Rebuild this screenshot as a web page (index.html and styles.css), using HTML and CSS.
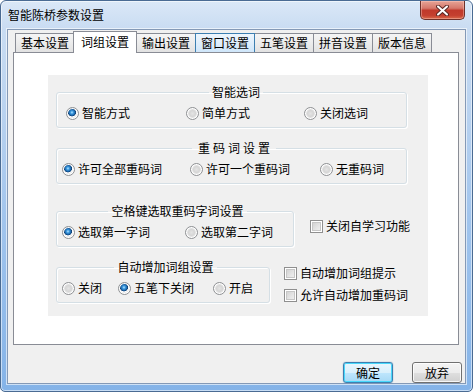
FILE: index.html
```html
<!DOCTYPE html>
<html lang="zh-CN">
<head>
<meta charset="utf-8">
<title>智能陈桥参数设置</title>
<link rel="stylesheet" href="styles.css">
</head>
<body>
<div class="window">
  <div class="titlebar">
    <span class="title">智能陈桥参数设置</span>
    <div class="close">
      <svg width="13" height="11" viewBox="0 0 13 11">
        <path d="M2 1.5 L11 9.5 M11 1.5 L2 9.5" stroke="#5b2a26" stroke-width="4" stroke-linecap="round"/>
        <path d="M2 1.5 L11 9.5 M11 1.5 L2 9.5" stroke="#ffffff" stroke-width="2" stroke-linecap="round"/>
      </svg>
    </div>
  </div>
  <div class="client">
    <div class="tabs">
      <div class="tab">基本设置</div>
      <div class="tab sel">词组设置</div>
      <div class="tab">输出设置</div>
      <div class="tab hover">窗口设置</div>
      <div class="tab">五笔设置</div>
      <div class="tab">拼音设置</div>
      <div class="tab">版本信息</div>
    </div>
    <div class="panel">
      <div class="inner">
        <fieldset class="group g1">
          <legend>智能选词</legend>
          <div class="opts">
            <label class="opt"><span class="radio on"></span>智能方式</label>
            <label class="opt"><span class="radio"></span>简单方式</label>
            <label class="opt"><span class="radio"></span>关闭选词</label>
          </div>
        </fieldset>
        <fieldset class="group g2">
          <legend class="spaced">重码词设置</legend>
          <div class="opts">
            <label class="opt"><span class="radio on"></span>许可全部重码词</label>
            <label class="opt"><span class="radio"></span>许可一个重码词</label>
            <label class="opt"><span class="radio"></span>无重码词</label>
          </div>
        </fieldset>
        <div class="row r3">
          <fieldset class="group g3">
            <legend>空格键选取重码字词设置</legend>
            <div class="opts">
              <label class="opt"><span class="radio on"></span>选取第一字词</label>
              <label class="opt"><span class="radio"></span>选取第二字词</label>
            </div>
          </fieldset>
          <div class="checks c3">
            <label class="opt"><span class="check"></span>关闭自学习功能</label>
          </div>
        </div>
        <div class="row r4">
          <fieldset class="group g4">
            <legend>自动增加词组设置</legend>
            <div class="opts">
              <label class="opt"><span class="radio"></span>关闭</label>
              <label class="opt"><span class="radio on"></span>五笔下关闭</label>
              <label class="opt"><span class="radio"></span>开启</label>
            </div>
          </fieldset>
          <div class="checks c4">
            <label class="opt"><span class="check"></span>自动增加词组提示</label>
            <label class="opt"><span class="check"></span>允许自动增加重码词</label>
          </div>
        </div>
      </div>
    </div>
    <div class="buttons">
      <div class="btn default">确定</div>
      <div class="btn">放弃</div>
    </div>
  </div>
</div>
</body>
</html>
```
FILE: styles.css
```css
html, body {
  margin: 0;
  padding: 0;
  background: #ffffff;
}
body {
  font-family: "Noto Sans CJK SC", "Microsoft YaHei", sans-serif;
  font-size: 12px;
  line-height: 14px;
  color: #000;
}
.window {
  box-sizing: border-box;
  width: 473px;
  height: 392px;
  border: 1px solid #4a6b93;
  border-radius: 6px 6px 5px 5px;
  background: linear-gradient(180deg, #dbe8f7 0%, #c9dcf2 7%, #bcd4f0 25%, #a2c5ed 55%, #84b3e8 100%);
  box-shadow: inset 0 0 0 1px rgba(255,255,255,0.55);
  overflow: hidden;
}
.titlebar {
  height: 28px;
  display: flex;
  align-items: center;
  padding-left: 7px;
}
.title {
  color: #000;
  line-height: 14px;
}
.close {
  margin-left: auto;
  margin-right: 7px;
  align-self: flex-start;
  box-sizing: border-box;
  width: 45px;
  height: 19px;
  border: 1px solid #6e3029;
  border-top: 0;
  border-radius: 0 0 5px 5px;
  background: linear-gradient(180deg, #e7a496 0%, #d6786b 40%, #c0392b 52%, #c4402f 80%, #d9694a 100%);
  box-shadow: inset 0 0 0 1px rgba(255,210,200,0.4);
  display: flex;
  align-items: center;
  justify-content: center;
}
.client {
  box-sizing: border-box;
  margin: 0 6px;
  height: 355px;
  border: 1px solid #8499b6;
  background: #f0f0f0;
  box-shadow: 0 0 0 1px rgba(255,255,255,0.6);
}
.tabs {
  display: flex;
  align-items: flex-end;
  height: 21px;
  margin: 1px 0 0 5px;
  padding-left: 2px;
}
.tab {
  box-sizing: border-box;
  height: 19px;
  padding: 0 5px;
  border: 1px solid #898c95;
  border-bottom: 0;
  margin-right: -1px;
  line-height: 18px;
  background: linear-gradient(180deg, #f5f5f5 0%, #ececec 50%, #e2e2e2 100%);
  white-space: nowrap;
}
.tab.sel {
  position: relative;
  z-index: 1;
  height: 22px;
  margin: 0 -1px -1px -1px;
  padding: 0 7px;
  line-height: 20px;
  background: #ffffff;
}
.tab.hover {
  position: relative;
  z-index: 1;
  border-color: #3c7fb1;
  background: linear-gradient(180deg, #eef6fd 0%, #dfeefb 50%, #cfe6fa 100%);
}
.panel {
  box-sizing: border-box;
  width: 446px;
  height: 293px;
  margin-left: 5px;
  border: 1px solid #898c95;
  background: #ffffff;
  padding: 22px 0 0 34px;
}
.inner {
  box-sizing: border-box;
  width: 380px;
  height: 241px;
  background: #f0f0f0;
  padding: 10px 0 0 8px;
}
.group {
  box-sizing: border-box;
  margin: 0;
  padding: 6px 0 6px 5px;
  min-width: 0;
  border: 1px solid #d5dfe5;
  border-radius: 3px;
  box-shadow: inset 1px 1px 0 #ffffff, 1px 1px 0 #ffffff;
}
.group legend {
  margin: 0 auto;
  padding: 0 3px;
  line-height: 14px;
  white-space: nowrap;
}
.group legend.spaced {
  letter-spacing: 3px;
  padding-left: 6px;
}
.g1 { width: 351px; padding-left: 9px; }
.g2 { width: 351px; margin-top: 13px; }
.g3 { width: 238px; }
.g4 { width: 214px; }
.row {
  display: flex;
  align-items: flex-start;
}
.r3 { margin-top: 20px; }
.r4 { margin-top: 13px; }
.opts {
  display: grid;
  height: 16px;
}
.g1 .opts { grid-template-columns: 120px 118px auto; }
.g2 .opts { grid-template-columns: 128px 130px auto; }
.g3 .opts { grid-template-columns: 123px auto; }
.g4 .opts { grid-template-columns: 56px 95px auto; }
.opt {
  display: flex;
  align-items: center;
  height: 16px;
  line-height: 16px;
  white-space: nowrap;
}
.radio {
  box-sizing: border-box;
  flex: none;
  width: 13px;
  height: 13px;
  margin-right: 3px;
  border-radius: 50%;
  border: 1px solid #8e9093;
  background: radial-gradient(circle at 50% 50%, #e4e4e4 0, #d6d6d6 3px, #f2f2f2 5.5px, #ffffff 6px);
  box-shadow: inset 0 0 0 1px #ffffff;
}
.radio.on {
  background: radial-gradient(circle at 45% 40%, #b8e6ff 0, #3c9ae0 1.5px, #1a64a8 3px, #0f3f73 3.7px, #ffffff 4.3px, #e6e6e6 5.5px, #ffffff 6px);
}
.check {
  box-sizing: border-box;
  flex: none;
  width: 13px;
  height: 13px;
  margin-right: 3px;
  border: 1px solid #8f8f8f;
  background: linear-gradient(135deg, #cbcbcb 0%, #e6e6e6 60%, #f4f4f4 100%);
  box-shadow: inset 0 0 0 1px #ffffff, inset 0 0 0 2px #c6c6c6;
}
.checks {
  display: flex;
  flex-direction: column;
}
.c3 { margin: 14px 0 0 16px; }
.c4 { margin: 5px 0 0 14px; gap: 6px; }
.buttons {
  display: flex;
  justify-content: flex-end;
  gap: 19px;
  margin-top: 17px;
  padding-right: 3px;
}
.btn {
  box-sizing: border-box;
  width: 50px;
  height: 21px;
  border: 1px solid #707070;
  border-radius: 3px;
  background: linear-gradient(180deg, #f4f4f4 0%, #ececec 50%, #dfdfdf 51%, #d0d0d0 100%);
  box-shadow: inset 0 0 0 1px rgba(255,255,255,0.8);
  text-align: center;
  line-height: 19px;
}
.btn.default {
  border-color: #3c7fb1;
  background: linear-gradient(180deg, #eaf6fd 0%, #d9f0fc 50%, #bee6fd 51%, #a7d9f5 100%);
  box-shadow: inset 0 0 0 1px #48d8fb, 0 0 1px #3c7fb1;
}
```
